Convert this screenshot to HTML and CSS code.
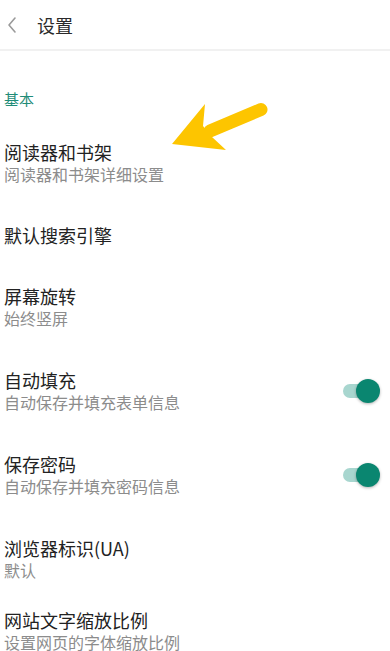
FILE: index.html
```html
<!DOCTYPE html>
<html lang="zh">
<head>
<meta charset="utf-8">
<link rel="stylesheet" href="styles.css">
</head>
<body>
<div class="page">
  <header class="topbar">
    <svg class="back" width="12" height="18" viewBox="0 0 12 18"><path d="M9 2 L3 9 L9 16" fill="none" stroke="#9a9a9a" stroke-width="1.6" stroke-linecap="round" stroke-linejoin="round"/></svg>
    <span class="topbar-title">设置</span>
  </header>

  <div class="section-label">基本</div>

  <div class="row">
    <div class="texts">
      <div class="title">阅读器和书架</div>
      <div class="sub">阅读器和书架详细设置</div>
    </div>
  </div>

  <div class="row row--single">
    <div class="texts">
      <div class="title">默认搜索引擎</div>
    </div>
  </div>

  <div class="row">
    <div class="texts">
      <div class="title">屏幕旋转</div>
      <div class="sub">始终竖屏</div>
    </div>
  </div>

  <div class="row">
    <div class="texts">
      <div class="title">自动填充</div>
      <div class="sub">自动保存并填充表单信息</div>
    </div>
    <div class="toggle"><span class="track"></span><span class="knob"></span></div>
  </div>

  <div class="row">
    <div class="texts">
      <div class="title">保存密码</div>
      <div class="sub">自动保存并填充密码信息</div>
    </div>
    <div class="toggle"><span class="track"></span><span class="knob"></span></div>
  </div>

  <div class="row">
    <div class="texts">
      <div class="title">浏览器标识(UA)</div>
      <div class="sub">默认</div>
    </div>
  </div>

  <div class="row row--compact">
    <div class="texts">
      <div class="title">网站文字缩放比例</div>
      <div class="sub">设置网页的字体缩放比例</div>
    </div>
  </div>

  <svg class="arrow" width="120" height="70" viewBox="0 0 120 70">
    <line x1="101" y1="19.5" x2="50" y2="41" stroke="#fdc500" stroke-width="13" stroke-linecap="round"/>
    <polygon points="12,54 45,14 43,36 52,47 66,60" fill="#fdc500"/>
  </svg>
</div>
</body>
</html>
```

FILE: styles.css
```css
html, body {
  margin: 0;
  padding: 0;
  background: #ffffff;
}

body {
  font-family: "Noto Sans CJK SC", "Noto Sans", sans-serif;
  color: #222222;
}

.page {
  position: relative;
  width: 390px;
  min-height: 651px;
  overflow: hidden;
}

.topbar {
  display: flex;
  align-items: center;
  height: 49px;
  border-bottom: 2px solid #f1f1f1;
  padding-left: 6px;
}

.back {
  display: block;
  margin-right: 19px;
}

.topbar-title {
  font-size: 18px;
  line-height: 22px;
  color: #2a2a2a;
}

.section-label {
  padding: 38px 4px 12px;
  font-size: 15px;
  line-height: 20px;
  color: #1f8c78;
}

.row {
  display: flex;
  align-items: center;
  justify-content: space-between;
  padding: 20px 10px 20px 4px;
}

.row--single {
  padding-top: 19px;
  padding-bottom: 19px;
}

.row--compact {
  padding-top: 8px;
}

.title {
  font-size: 18px;
  line-height: 22px;
  color: #222222;
}

.sub {
  font-size: 16px;
  line-height: 22px;
  color: #8c8c8c;
}

.toggle {
  position: relative;
  width: 37px;
  height: 24px;
  flex: none;
}

.track {
  position: absolute;
  left: 0;
  top: 5px;
  width: 34px;
  height: 14px;
  border-radius: 7px;
  background: #a8d6cf;
}

.knob {
  position: absolute;
  right: 0;
  top: 0;
  width: 24px;
  height: 24px;
  border-radius: 50%;
  background: #0a8670;
  box-shadow: 0 1px 3px rgba(0, 0, 0, 0.3);
}

.arrow {
  position: absolute;
  left: 160px;
  top: 90px;
}
```
